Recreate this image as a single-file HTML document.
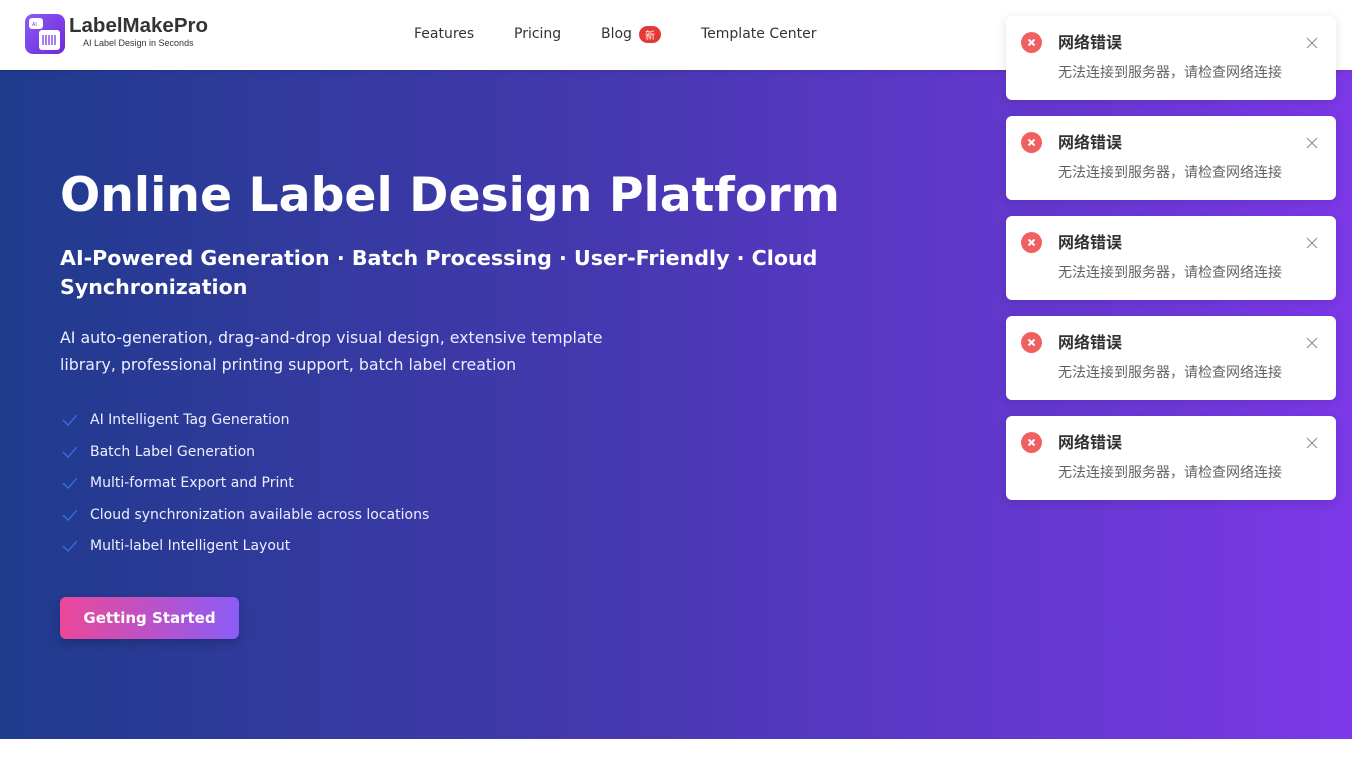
<!DOCTYPE html>
<html><head><meta charset="utf-8"><style>
*{margin:0;padding:0;box-sizing:border-box}
body{width:1352px;height:760px;overflow:hidden;font-family:"DejaVu Sans","Liberation Sans","Noto Sans CJK SC",sans-serif;background:#fff;position:relative}
header{position:absolute;top:0;left:0;width:1352px;height:70px;background:#fff;box-shadow:0 1px 4px rgba(0,0,0,.12);z-index:2}
.logo{position:absolute;left:25px;top:14px;width:40px;height:40px;border-radius:8px;background:linear-gradient(135deg,#8b5cf6,#6d28d9)}
.brand{position:absolute;left:69px;top:14px;font:bold 20.5px "Liberation Sans",sans-serif;color:#333}
.tag{position:absolute;left:83px;top:38px;font:9px "Liberation Sans",sans-serif;color:#333}
nav a{position:absolute;top:26px;font-size:14px;color:#333;text-decoration:none}
.badge{position:absolute;left:639px;top:26px;width:22px;height:17px;border-radius:9px;background:#e53935;color:#fff;font:10px "Noto Sans CJK SC",sans-serif;text-align:center;line-height:17px}
.hero{position:absolute;top:70px;left:0;width:1352px;height:669px;background:linear-gradient(90deg,#1f3b8c 0%,#4a38b4 50%,#7c38e8 100%)}
h1{position:absolute;left:60px;top:168px;font-size:47.3px;font-weight:bold;color:#fff;white-space:nowrap}
h2{position:absolute;left:60px;top:244px;width:800px;font-size:20.6px;line-height:29px;font-weight:bold;color:#fff}
.desc{position:absolute;left:60px;top:324px;width:580px;font-size:15.8px;line-height:27px;color:#eef}
ul{position:absolute;left:60px;top:408px;list-style:none}
li{height:31.6px;font-size:14px;color:#eef;padding-left:30px;position:relative;line-height:24px}
li svg{position:absolute;left:2px;top:6px}
.btn{position:absolute;left:60px;top:597px;width:179px;height:42px;border-radius:6px;background:linear-gradient(90deg,#ec4899,#8b5cf6);color:#fff;font-weight:bold;font-size:15px;text-align:center;line-height:42px;box-shadow:0 4px 10px rgba(0,0,0,.2)}
.toast{position:absolute;left:1006px;width:330px;height:84px;background:#fff;border-radius:6px;box-shadow:0 2px 10px rgba(0,0,0,.12);z-index:3}
.toast .ic{position:absolute;left:15px;top:16px;width:21px;height:21px;border-radius:50%;background:#f06060}
.toast .t{position:absolute;left:52px;top:13px;font:bold 16px "Noto Sans CJK SC",sans-serif;color:#303133}
.toast .m{position:absolute;left:52px;top:46px;font:14px "Noto Sans CJK SC",sans-serif;color:#606266}
.toast .x{position:absolute;left:300px;top:21px}
</style></head><body>
<header>
<div class="logo"><svg width="40" height="40"><rect x="4" y="4" width="14" height="11" rx="3" fill="#fff"/><text x="7" y="12" font-size="5" fill="#7c3aed" font-family="Liberation Sans">AI</text><rect x="14" y="16" width="21" height="20" rx="3" fill="#fff"/><g stroke="#6d28d9" stroke-width="1.2"><line x1="18" y1="21" x2="18" y2="31"/><line x1="21" y1="21" x2="21" y2="31"/><line x1="24" y1="21" x2="24" y2="31"/><line x1="27" y1="21" x2="27" y2="31"/><line x1="30" y1="21" x2="30" y2="31"/></g></svg></div>
<div class="brand">LabelMakePro</div>
<div class="tag">AI Label Design in Seconds</div>
<nav><a style="left:414px">Features</a><a style="left:514px">Pricing</a><a style="left:601px">Blog</a><a style="left:701px">Template Center</a></nav>
<div class="badge">新</div>
</header>
<div class="hero">
</div>
<h1>Online Label Design Platform</h1>
<h2>AI-Powered Generation · Batch Processing · User-Friendly · Cloud Synchronization</h2>
<div class="desc">AI auto-generation, drag-and-drop visual design, extensive template library, professional printing support, batch label creation</div>
<ul>
<li><svg width="16" height="12"><path d="M1 6l5 5 9-10" stroke="#3b6fe0" stroke-width="1.3" fill="none"/></svg>AI Intelligent Tag Generation</li>
<li><svg width="16" height="12"><path d="M1 6l5 5 9-10" stroke="#3b6fe0" stroke-width="1.3" fill="none"/></svg>Batch Label Generation</li>
<li><svg width="16" height="12"><path d="M1 6l5 5 9-10" stroke="#3b6fe0" stroke-width="1.3" fill="none"/></svg>Multi-format Export and Print</li>
<li><svg width="16" height="12"><path d="M1 6l5 5 9-10" stroke="#3b6fe0" stroke-width="1.3" fill="none"/></svg>Cloud synchronization available across locations</li>
<li><svg width="16" height="12"><path d="M1 6l5 5 9-10" stroke="#3b6fe0" stroke-width="1.3" fill="none"/></svg>Multi-label Intelligent Layout</li>
</ul>
<div class="btn">Getting Started</div>
<div class="toast" style="top:16px"><div class="ic"><svg width="21" height="21"><path d="M7.5 7.5l6 6M13.5 7.5l-6 6" stroke="#fff" stroke-width="2"/></svg></div><div class="t">网络错误</div><div class="m">无法连接到服务器，请检查网络连接</div><svg class="x" width="12" height="12"><path d="M1 1l10 10M11 1L1 11" stroke="#909399" stroke-width="1.2"/></svg></div>
<div class="toast" style="top:116px"><div class="ic"><svg width="21" height="21"><path d="M7.5 7.5l6 6M13.5 7.5l-6 6" stroke="#fff" stroke-width="2"/></svg></div><div class="t">网络错误</div><div class="m">无法连接到服务器，请检查网络连接</div><svg class="x" width="12" height="12"><path d="M1 1l10 10M11 1L1 11" stroke="#909399" stroke-width="1.2"/></svg></div>
<div class="toast" style="top:216px"><div class="ic"><svg width="21" height="21"><path d="M7.5 7.5l6 6M13.5 7.5l-6 6" stroke="#fff" stroke-width="2"/></svg></div><div class="t">网络错误</div><div class="m">无法连接到服务器，请检查网络连接</div><svg class="x" width="12" height="12"><path d="M1 1l10 10M11 1L1 11" stroke="#909399" stroke-width="1.2"/></svg></div>
<div class="toast" style="top:316px"><div class="ic"><svg width="21" height="21"><path d="M7.5 7.5l6 6M13.5 7.5l-6 6" stroke="#fff" stroke-width="2"/></svg></div><div class="t">网络错误</div><div class="m">无法连接到服务器，请检查网络连接</div><svg class="x" width="12" height="12"><path d="M1 1l10 10M11 1L1 11" stroke="#909399" stroke-width="1.2"/></svg></div>
<div class="toast" style="top:416px"><div class="ic"><svg width="21" height="21"><path d="M7.5 7.5l6 6M13.5 7.5l-6 6" stroke="#fff" stroke-width="2"/></svg></div><div class="t">网络错误</div><div class="m">无法连接到服务器，请检查网络连接</div><svg class="x" width="12" height="12"><path d="M1 1l10 10M11 1L1 11" stroke="#909399" stroke-width="1.2"/></svg></div>
</body></html>
